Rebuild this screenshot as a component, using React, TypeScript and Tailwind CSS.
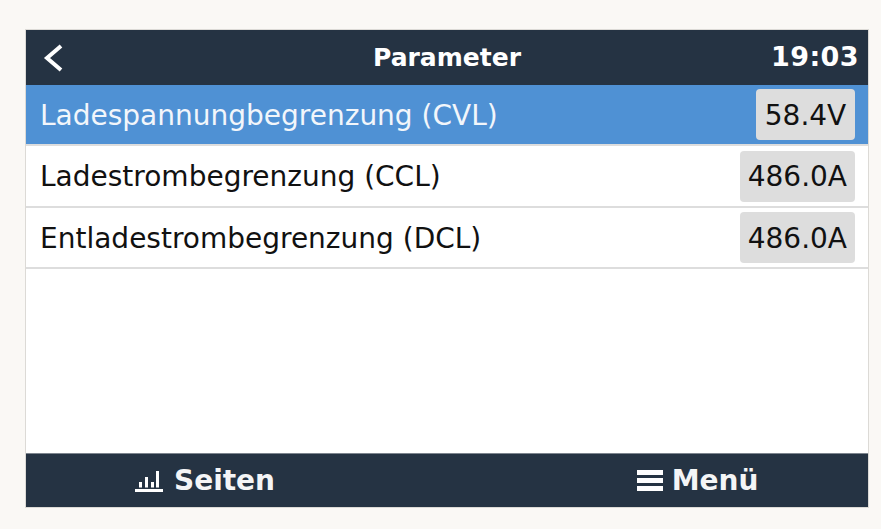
import React from 'react'

const rows = [
  { label: 'Ladespannungbegrenzung (CVL)', value: '58.4V', active: true, height: 'h-[61px]' },
  { label: 'Ladestrombegrenzung (CCL)', value: '486.0A', active: false, height: 'h-[62px]' },
  { label: 'Entladestrombegrenzung (DCL)', value: '486.0A', active: false, height: 'h-[61px]' },
]

const App = () => {
  return (
    <div className="h-[529px] w-[881px] overflow-hidden bg-[#faf8f5] px-[25px] pt-[29px] font-['DejaVu_Sans',sans-serif]">
      <div className="flex h-[479px] w-[844px] flex-col border border-[#dcdad6] bg-white">
        {/* Header */}
        <div className="flex h-[55px] shrink-0 items-center bg-[#253343] pl-[17px] pr-[9px] text-white">
          <div className="flex-1">
            <svg width="20" height="28" viewBox="0 0 20 28" fill="none">
              <path d="M18 2 L4 14 L18 26" stroke="white" strokeWidth="4" />
            </svg>
          </div>
          <div className="mr-[8px] text-[25px] font-bold">Parameter</div>
          <div className="flex-1 text-right text-[27px] font-bold tracking-[0.4px]">19:03</div>
        </div>

        {/* Rows */}
        <div className="flex-1">
          {rows.map((row) => (
            <div
              key={row.label}
              className={`flex items-center justify-between border-b-2 border-[#dddddd] pl-[14px] pr-[13px] text-[28px] ${row.height} ${
                row.active ? 'bg-[#4f91d4] text-[#f2f6fb]' : 'bg-white text-[#111111]'
              }`}
            >
              <span className="translate-y-[1px]">{row.label}</span>
              <span className="flex h-[51px] min-w-[99px] items-center justify-center rounded-[4px] bg-[#dddddd] px-[8px] text-[#111111]">
                <span className="translate-y-[1px]">{row.value}</span>
              </span>
            </div>
          ))}
        </div>

        {/* Footer */}
        <div className="flex h-[54px] shrink-0 items-center justify-between border-t border-[#7d858e] bg-[#253343] text-[28px] font-bold text-[#f4f5f6]">
          <div className="flex w-[358px] items-center justify-center gap-[11px]">
            <svg width="28" height="24" viewBox="0 0 28 24" fill="white" className="shrink-0">
              <rect x="0" y="20" width="28" height="3" />
              <rect x="4" y="13" width="3" height="5.5" />
              <rect x="10" y="8" width="3" height="10.5" />
              <rect x="16" y="13" width="3" height="5.5" />
              <rect x="21" y="2" width="3" height="16.5" />
            </svg>
            <span>Seiten</span>
          </div>
          <div className="flex w-[341px] items-center justify-center gap-[9px]">
            <svg width="26" height="22" viewBox="0 0 26 22" fill="white" className="shrink-0">
              <rect x="0" y="0" width="26" height="5" />
              <rect x="0" y="8" width="26" height="5" />
              <rect x="0" y="16" width="26" height="5" />
            </svg>
            <span>Menü</span>
          </div>
        </div>
      </div>
    </div>
  )
}

export default App
